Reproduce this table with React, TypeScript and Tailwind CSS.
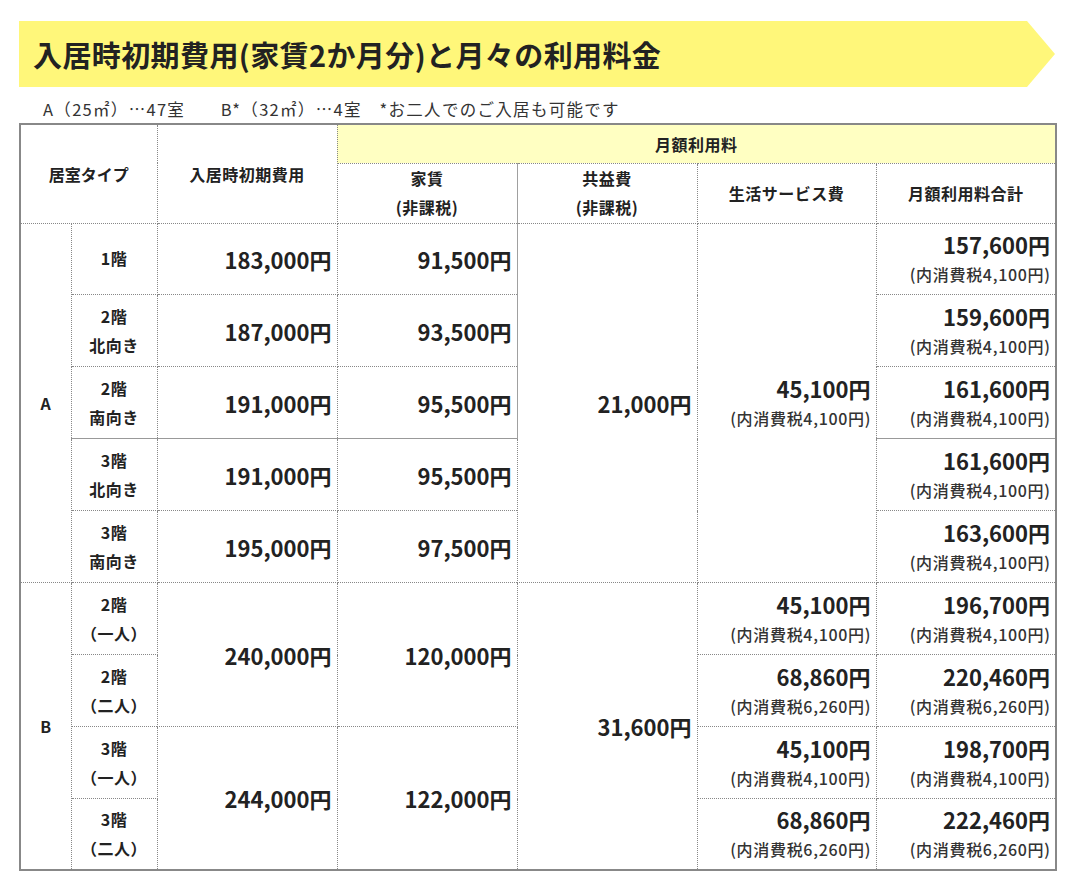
import React from "react";

type Price = { main: string; tax?: string };

const FONT = "font-['Noto_Sans_CJK_JP','Noto_Sans',sans-serif]";

const cell = "border border-dotted border-[#888] px-[5px] py-0 align-middle";
const solidTop = "[border-top-style:solid] border-t-[#999]";
const solidRight = "[border-right-style:solid] border-r-[#a0a0a0]";

function PriceText({ p }: { p: Price }) {
  return (
    <div className="text-right">
      <div className="text-[22px] font-bold leading-[30px]">{p.main}</div>
      {p.tax && (
        <div className="mr-[-0.7px] text-[16px] font-medium leading-[30px] tracking-[0.7px] text-[#333]">
          {p.tax}
        </div>
      )}
    </div>
  );
}

function Floor({ lines }: { lines: string[] }) {
  return (
    <div className="text-center text-[16px] font-bold leading-[29px] tracking-[0.5px]">
      {lines.map((l) => (
        <div key={l}>{l}</div>
      ))}
    </div>
  );
}

const tax41 = "(内消費税4,100円)";
const tax62 = "(内消費税6,260円)";

const typeA = [
  { floor: ["1階"], init: "183,000円", rent: "91,500円", total: "157,600円" },
  { floor: ["2階", "北向き"], init: "187,000円", rent: "93,500円", total: "159,600円" },
  { floor: ["2階", "南向き"], init: "191,000円", rent: "95,500円", total: "161,600円" },
  { floor: ["3階", "北向き"], init: "191,000円", rent: "95,500円", total: "161,600円" },
  { floor: ["3階", "南向き"], init: "195,000円", rent: "97,500円", total: "163,600円" },
];

const typeB = [
  { floor: ["2階", "（一人）"], init: "240,000円", rent: "120,000円", svc: { main: "45,100円", tax: tax41 }, total: { main: "196,700円", tax: tax41 } },
  { floor: ["2階", "（二人）"], svc: { main: "68,860円", tax: tax62 }, total: { main: "220,460円", tax: tax62 } },
  { floor: ["3階", "（一人）"], init: "244,000円", rent: "122,000円", svc: { main: "45,100円", tax: tax41 }, total: { main: "198,700円", tax: tax41 } },
  { floor: ["3階", "（二人）"], svc: { main: "68,860円", tax: tax62 }, total: { main: "222,460円", tax: tax62 } },
];

export default function App() {
  return (
    <div className={`${FONT} min-h-screen bg-white px-[19px] pt-[21px] text-[#222]`}>
      {/* title band with arrow tip */}
      <div className="flex h-[66px] w-[1036px] items-center bg-[#fff77a] pl-[14px] [clip-path:polygon(0_0,calc(100%_-_28px)_0,100%_50%,calc(100%_-_28px)_100%,0_100%)]">
        <h1 className="text-[29px] font-bold leading-none tracking-[0.4px] text-[#222]">
          入居時初期費用(家賃2か月分)と月々の利用料金
        </h1>
      </div>

      <p className="mt-2 h-[28px] whitespace-pre pl-[24px] text-[16.5px] leading-[28px] tracking-[1.3px] text-[#333]">
        {"A（25㎡）…47室　　B*（32㎡）…4室　*お二人でのご入居も可能です"}
      </p>

      <table className="w-[1036px] table-fixed border-collapse border-2 border-solid border-[#888]">
        <colgroup>
          <col className="w-[51px]" />
          <col className="w-[86px]" />
          <col className="w-[180px]" />
          <col className="w-[180px]" />
          <col className="w-[180px]" />
          <col className="w-[179px]" />
          <col className="w-[180px]" />
        </colgroup>
        <thead>
          <tr className="h-[39px]">
            <th rowSpan={2} colSpan={2} className={`${cell} text-center text-[16px] font-bold`}>
              居室タイプ
            </th>
            <th rowSpan={2} className={`${cell} text-center text-[16px] font-bold tracking-[0.5px]`}>
              入居時初期費用
            </th>
            <th colSpan={4} className={`${cell} bg-[#ffffc2] text-center text-[16px] font-bold tracking-[0.5px]`}>
              月額利用料
            </th>
          </tr>
          <tr className="h-[60px]">
            <th className={`${cell} ${solidRight} text-center text-[16px] font-bold leading-[29px] tracking-[0.5px]`}>
              家賃
              <br />
              (非課税)
            </th>
            <th className={`${cell} text-center text-[16px] font-bold leading-[29px] tracking-[0.5px]`}>
              共益費
              <br />
              (非課税)
            </th>
            <th className={`${cell} text-center text-[16px] font-bold tracking-[0.5px]`}>生活サービス費</th>
            <th className={`${cell} text-center text-[16px] font-bold tracking-[0.5px]`}>月額利用料合計</th>
          </tr>
        </thead>
        <tbody>
          {typeA.map((r, i) => {
            const top = i === 3 ? solidTop : "";
            const right = i < 3 ? solidRight : "";
            return (
              <tr key={`a${i}`} className="h-[71.95px]">
                {i === 0 && (
                  <td rowSpan={5} className={`${cell} text-center text-[16px] font-bold`}>
                    A
                  </td>
                )}
                <td className={`${cell} ${top}`}>
                  <Floor lines={r.floor} />
                </td>
                <td className={`${cell} ${top}`}>
                  <PriceText p={{ main: r.init }} />
                </td>
                <td className={`${cell} ${top} ${right}`}>
                  <PriceText p={{ main: r.rent }} />
                </td>
                {i === 0 && (
                  <>
                    <td rowSpan={5} className={cell}>
                      <PriceText p={{ main: "21,000円" }} />
                    </td>
                    <td rowSpan={5} className={cell}>
                      <PriceText p={{ main: "45,100円", tax: tax41 }} />
                    </td>
                  </>
                )}
                <td className={`${cell} ${top}`}>
                  <PriceText p={{ main: r.total, tax: tax41 }} />
                </td>
              </tr>
            );
          })}
          {typeB.map((r, i) => (
            <tr key={`b${i}`} className="h-[71.95px]">
              {i === 0 && (
                <td rowSpan={4} className={`${cell} text-center text-[16px] font-bold`}>
                  B
                </td>
              )}
              <td className={cell}>
                <Floor lines={r.floor} />
              </td>
              {r.init && (
                <>
                  <td rowSpan={2} className={cell}>
                    <PriceText p={{ main: r.init }} />
                  </td>
                  <td rowSpan={2} className={cell}>
                    <PriceText p={{ main: r.rent as string }} />
                  </td>
                </>
              )}
              {i === 0 && (
                <td rowSpan={4} className={cell}>
                  <PriceText p={{ main: "31,600円" }} />
                </td>
              )}
              <td className={cell}>
                <PriceText p={r.svc} />
              </td>
              <td className={cell}>
                <PriceText p={r.total} />
              </td>
            </tr>
          ))}
        </tbody>
      </table>
    </div>
  );
}
